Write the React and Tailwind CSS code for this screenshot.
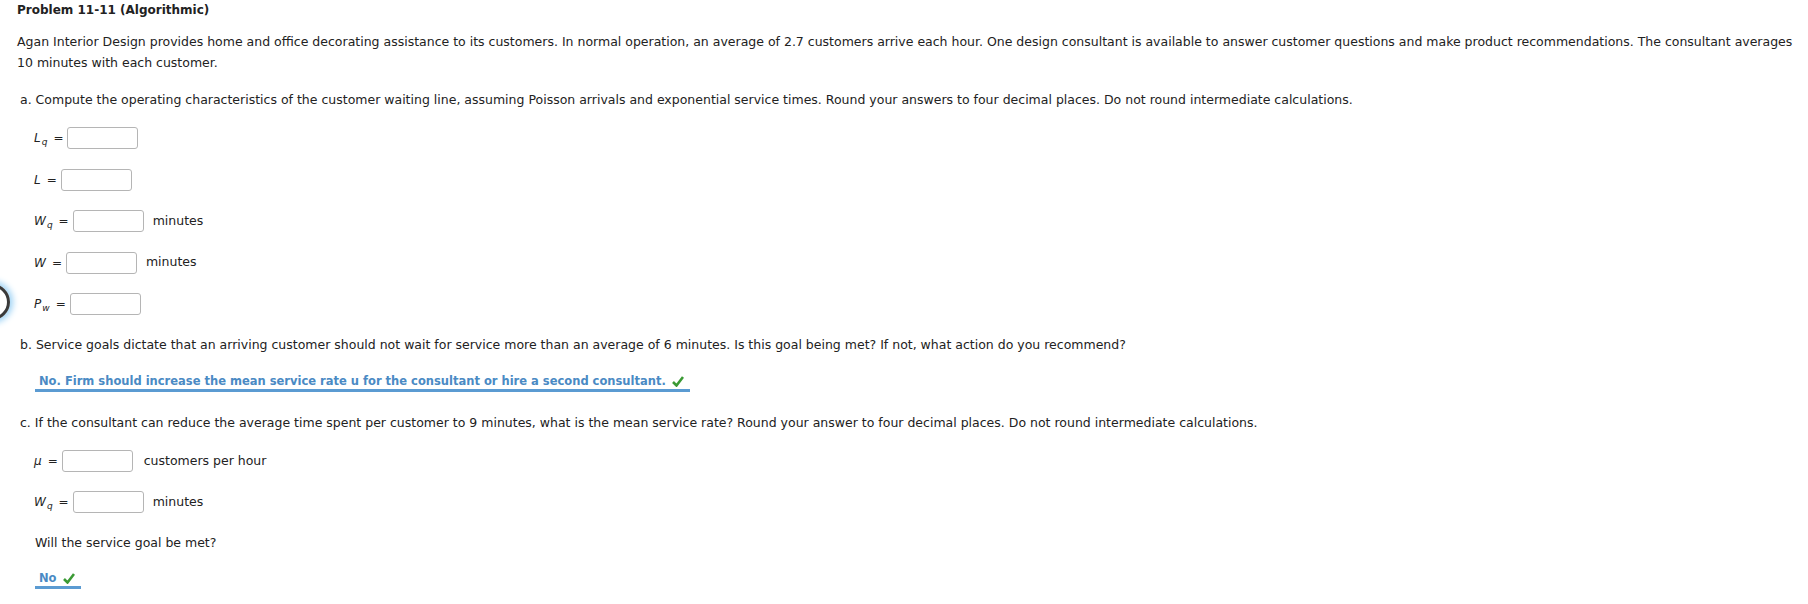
const font = { fontFamily: '"DejaVu Sans", Verdana, sans-serif' };

function Var({ base, sub }) {
  return (
    <span className="italic text-[12px] text-[#222] leading-[16px]" style={{ fontFamily: '"DejaVu Sans", sans-serif' }}>
      {base}
      {sub && <span className="inline-block text-[9px] italic ml-[1px] translate-y-[3px]">{sub}</span>}
    </span>
  );
}

function Field({ base, sub, unit, unitGap = "ml-[9px]" }) {
  return (
    <div className="flex items-center h-[22px] pl-[17px]">
      <Var base={base} sub={sub} />
      <span className="ml-[6px] mr-[4px] text-[12px] text-[#222]">=</span>
      <div className="w-[71px] h-[22px] border border-[#b5b5b5] rounded-[3px] bg-white" />
      {unit && <span className={`${unitGap} text-[12.5px] text-[#222]`}>{unit}</span>}
    </div>
  );
}

function Answer({ children }) {
  return (
    <div className="inline-flex items-center pl-[4px] pr-[6px] border-b-[3px] border-[#5b9bd2]">
      <span className="font-bold text-[11.5px] leading-[16px] text-[#4a8ac4]">{children}</span>
      <svg className="ml-[6px]" width="12" height="11" viewBox="0 0 12 11">
        <path d="M1 6 L4.5 9.5 L11 1" fill="none" stroke="#3b9a35" strokeWidth="2.6" />
      </svg>
    </div>
  );
}

export default function App() {
  return (
    <div className="relative w-[1808px] h-[604px] bg-white overflow-hidden text-[#222]" style={font}>
      <div
        className="absolute left-[-26px] top-[284px] w-[36px] h-[36px] rounded-full border-[3px] border-[#3a3a3a]"
        style={{ boxShadow: "0 0 6px 3px #9fd3f5" }}
      />
      <div className="pl-[17px] pt-[2px]">
        <h1 className="text-[12px] font-bold leading-[16px]">Problem 11-11 (Algorithmic)</h1>
        <p className="mt-[13px] text-[12.5px] leading-[21px] pr-[4px]">
          Agan Interior Design provides home and office decorating assistance to its customers. In normal operation, an average of 2.7 customers arrive each hour. One design consultant is available to answer customer questions and make product recommendations. The consultant averages 10 minutes with each customer.
        </p>
        <p className="mt-[18px] pl-[3px] text-[12.5px] leading-[18px]">
          a. Compute the operating characteristics of the customer waiting line, assuming Poisson arrivals and exponential service times. Round your answers to four decimal places. Do not round intermediate calculations.
        </p>
        <div className="mt-[18px] flex flex-col gap-[19.5px]">
          <Field base="L" sub="q" />
          <Field base="L" />
          <Field base="W" sub="q" unit="minutes" />
          <Field base="W" unit="minutes" />
          <Field base="P" sub="w" />
        </div>
        <p className="mt-[21px] pl-[3px] text-[12.5px] leading-[18px]">
          b. Service goals dictate that an arriving customer should not wait for service more than an average of 6 minutes. Is this goal being met? If not, what action do you recommend?
        </p>
        <div className="mt-[14px] pl-[18px]">
          <Answer>No. Firm should increase the mean service rate u for the consultant or hire a second consultant.</Answer>
        </div>
        <p className="mt-[22px] pl-[3px] text-[12.5px] leading-[18px]">
          c. If the consultant can reduce the average time spent per customer to 9 minutes, what is the mean service rate? Round your answer to four decimal places. Do not round intermediate calculations.
        </p>
        <div className="mt-[18px] flex flex-col gap-[19px]">
          <Field base="μ" unit="customers per hour" unitGap="ml-[11px]" />
          <Field base="W" sub="q" unit="minutes" />
        </div>
        <p className="mt-[21px] pl-[18px] text-[12.5px] leading-[18px]">Will the service goal be met?</p>
        <div className="mt-[13px] pl-[18px]">
          <Answer>No</Answer>
        </div>
      </div>
    </div>
  );
}
